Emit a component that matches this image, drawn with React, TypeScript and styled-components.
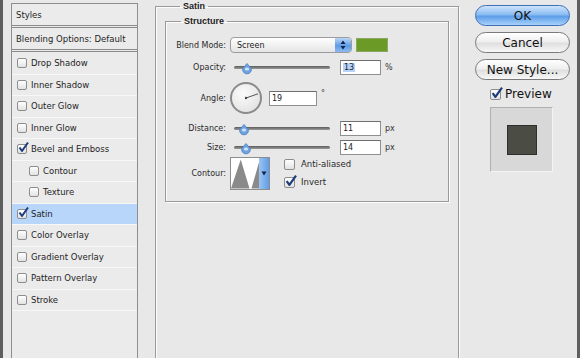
import React from 'react';
import styled, { createGlobalStyle } from 'styled-components';

const GlobalStyle = createGlobalStyle`
  body {
    margin: 0;
    background: #e8e8e8;
    font-family: "DejaVu Sans", sans-serif;
  }
  #root {
    height: 358px;
    overflow: hidden;
  }
`;

const Page = styled.div`
  display: flex;
  width: 580px;
  height: 358px;
  box-sizing: border-box;
  border-left: 3px solid #5e5e5e;
  border-right: 3px solid #5e5e5e;
  background: #e8e8e8;
  overflow: hidden;
`;

const StylesPanel = styled.div`
  margin: 3px 0 0 8px;
  width: 127px;
  box-sizing: border-box;
  border: 1px solid #8e8e8e;
  border-bottom: none;
  background: #ebebeb;
  display: flex;
  flex-direction: column;
  height: 400px;
`;

const PanelHead = styled.div`
  height: 21px;
  display: flex;
  align-items: center;
  padding-left: 4px;
  font-size: 8.5px;
  color: #1e1e1e;
  border-bottom: 3px double #8a8a8a;
`;

const StyleList = styled.div`
  display: grid;
  grid-auto-rows: 21.5px;
  padding-top: 1px;
`;

const StyleRow = styled.div<{ $indent?: boolean; $selected?: boolean }>`
  display: flex;
  align-items: center;
  gap: 4px;
  padding-left: ${(p) => (p.$indent ? 17 : 5)}px;
  font-size: 8.5px;
  color: #1e1e1e;
  border-bottom: 1px solid #f7f7f7;
  background: ${(p) => (p.$selected ? '#b7d6fa' : 'transparent')};
`;

const Box = styled.span<{ $size?: number }>`
  width: ${(p) => p.$size || 10}px;
  height: ${(p) => p.$size || 10}px;
  box-sizing: border-box;
  border: 1px solid #8d8d8d;
  border-radius: 2px;
  background: linear-gradient(#ffffff, #e2e2e2);
  position: relative;
  flex: none;
`;

const Tick = styled.svg`
  position: absolute;
  left: 0;
  top: -3px;
  overflow: visible;
`;

const Check = ({ on, size = 10 }: { on?: boolean; size?: number }) => (
  <Box $size={size}>
    {on && (
      <Tick width={size} height={size} viewBox="0 0 10 10">
        <path d="M1.5 5.5 L4 9 L10 0.5" fill="none" stroke="#1d3c7a" strokeWidth="2" strokeLinejoin="round" />
      </Tick>
    )}
  </Box>
);

const Middle = styled.fieldset`
  margin: 0 0 0 17px;
  padding: 0 9px;
  width: 304px;
  height: 400px;
  box-sizing: border-box;
  border: 1px solid #9a9a9a;
  box-shadow: inset 1px 1px 0 #fbfbfb, 1px 1px 0 #fbfbfb;
  flex: none;
`;

const Legend = styled.legend`
  margin-left: 15px;
  padding: 0 3px;
  font-family: "Liberation Sans", sans-serif;
  font-weight: bold;
  font-size: 9px;
  color: #222;
  line-height: 12px;
`;

const Structure = styled.fieldset`
  margin: 3px 0 0;
  padding: 8px 0 0;
  height: 187px;
  box-sizing: border-box;
  border: 1px solid #9a9a9a;
  box-shadow: inset 1px 1px 0 #fbfbfb, 1px 1px 0 #fbfbfb;
  display: flex;
  flex-direction: column;
`;

const Row = styled.div<{ $h: number }>`
  display: flex;
  align-items: center;
  height: ${(p) => p.$h}px;
  flex: none;
`;

const Label = styled.span`
  width: 60px;
  text-align: right;
  padding-right: 4px;
  font-size: 8px;
  color: #2a2a2a;
  flex: none;
`;

const Select = styled.div`
  width: 122px;
  height: 16px;
  box-sizing: border-box;
  border: 1px solid #9c9c9c;
  border-radius: 4px;
  background: linear-gradient(#ffffff, #e4e4e4);
  display: flex;
  align-items: center;
  overflow: hidden;
  font-size: 8px;
  color: #222;
`;

const SelectText = styled.span`
  flex: 1;
  padding-left: 6px;
`;

const SelectArrow = styled.span`
  width: 16px;
  height: 100%;
  background: linear-gradient(#bcd7f6, #5d9be6 55%, #8cbaf0);
  display: flex;
  align-items: center;
  justify-content: center;
`;

const Swatch = styled.div`
  width: 32px;
  height: 14px;
  margin-left: 4px;
  background: #6b9a26;
  border: 1px solid #8aa860;
  box-sizing: border-box;
`;

const Track = styled.div`
  position: relative;
  width: 96px;
  height: 3px;
  margin: 0 10px 0 4px;
  border-radius: 2px;
  background: linear-gradient(#5c5c5c, #9a9a9a);
  flex: none;
`;

const Thumb = styled.span`
  position: absolute;
  top: -6px;
  width: 10px;
  height: 12px;
`;

const Slider = ({ at }: { at: number }) => (
  <Track>
    <Thumb style={{ left: at }}>
      <svg width="10" height="12" viewBox="0 0 10 12">
        <path d="M5 0.5 L9.3 5.5 A4.4 4.4 0 1 1 0.7 5.5 Z" fill="#6fa3e0" stroke="#4a7cc0" strokeWidth="0.8" />
        <ellipse cx="5" cy="6" rx="2.2" ry="1.6" fill="#cbe2fb" />
      </svg>
    </Thumb>
  </Track>
);

const Field = styled.div<{ $w: number }>`
  width: ${(p) => p.$w}px;
  height: 15px;
  box-sizing: border-box;
  border: 1px solid #8f8f8f;
  border-top-color: #6e6e6e;
  background: #fff;
  font-size: 8px;
  color: #222;
  display: flex;
  align-items: center;
  padding-left: 2px;
  flex: none;
`;

const Selected = styled.span`
  background: #b5d4fb;
  padding: 0 1px;
`;

const Unit = styled.span<{ $top?: boolean }>`
  margin-left: 4px;
  font-size: 8px;
  color: #333;
  align-self: ${(p) => (p.$top ? 'flex-start' : 'center')};
  margin-top: ${(p) => (p.$top ? 10 : 0)}px;
`;

const Dial = styled.div`
  width: 32px;
  height: 32px;
  margin: 0 7px 0 0;
  box-sizing: border-box;
  border: 2px solid #8a8a8a;
  border-radius: 50%;
  background: radial-gradient(circle at 40% 35%, #fbfbfb, #dcdcdc);
  flex: none;
`;

const Contour = styled.div`
  width: 40px;
  height: 33px;
  box-sizing: border-box;
  border: 1px solid #8d8d8d;
  display: flex;
  background: #fff;
  flex: none;
`;

const ContourDrop = styled.span`
  width: 10px;
  background: linear-gradient(90deg, #9cc4f2, #5f9de6);
  display: flex;
  align-items: center;
  justify-content: center;
`;

const Options = styled.div`
  margin-left: 14px;
  display: flex;
  flex-direction: column;
  gap: 7px;
`;

const Option = styled.label`
  display: flex;
  align-items: center;
  gap: 6px;
  font-size: 8.5px;
  color: #2a2a2a;
`;

const Side = styled.div`
  flex: 1;
  padding: 5px 0 0 16px;
  display: flex;
  flex-direction: column;
  align-items: flex-start;
`;

const Button = styled.div<{ $primary?: boolean }>`
  width: 95px;
  height: 21px;
  box-sizing: border-box;
  border: 1px solid ${(p) => (p.$primary ? '#3f6fb6' : '#7a7a7a')};
  border-radius: 11px;
  background: ${(p) =>
    p.$primary
      ? 'linear-gradient(#cfe4fb, #86baf1 48%, #5a9ce8 52%, #a7d1fa)'
      : 'linear-gradient(#ffffff, #eeeeee 48%, #dedede 52%, #f7f7f7)'};
  display: flex;
  align-items: center;
  justify-content: center;
  font-size: 12px;
  color: #111;
  margin-bottom: 6px;
`;

const PreviewToggle = styled.div`
  display: flex;
  align-items: center;
  gap: 4px;
  margin: 1px 0 0 15px;
  font-size: 12px;
  color: #111;
`;

const PreviewBox = styled.div`
  margin: 6px 0 0 15px;
  width: 63px;
  height: 65px;
  box-sizing: border-box;
  background: #d8d8d8;
  border: 1px solid #b0b0b0;
  border-right-color: #f4f4f4;
  border-bottom-color: #f4f4f4;
  display: flex;
  align-items: center;
  justify-content: center;
`;

const PreviewSwatch = styled.div`
  width: 30px;
  height: 30px;
  box-sizing: border-box;
  background: #4b4d45;
  border: 1px solid #2f2f2f;
`;

const styleItems = [
  { name: 'Drop Shadow' },
  { name: 'Inner Shadow' },
  { name: 'Outer Glow' },
  { name: 'Inner Glow' },
  { name: 'Bevel and Emboss', on: true },
  { name: 'Contour', indent: true },
  { name: 'Texture', indent: true },
  { name: 'Satin', on: true, selected: true },
  { name: 'Color Overlay' },
  { name: 'Gradient Overlay' },
  { name: 'Pattern Overlay' },
  { name: 'Stroke' },
];

const App: React.FC = () => {
  return (
    <>
      <GlobalStyle />
      <Page>
        <StylesPanel>
          <PanelHead>Styles</PanelHead>
          <PanelHead>Blending Options: Default</PanelHead>
          <StyleList>
            {styleItems.map((item) => (
              <StyleRow key={item.name} $indent={item.indent} $selected={item.selected}>
                <Check on={item.on} />
                {item.name}
              </StyleRow>
            ))}
          </StyleList>
        </StylesPanel>

        <Middle>
          <Legend>Satin</Legend>
          <Structure>
            <Legend>Structure</Legend>
            <Row $h={20}>
              <Label>Blend Mode:</Label>
              <Select>
                <SelectText>Screen</SelectText>
                <SelectArrow>
                  <svg width="6" height="10" viewBox="0 0 6 10">
                    <path d="M3 0.5 L5.5 4 H0.5 Z M3 9.5 L5.5 6 H0.5 Z" fill="#10234a" />
                  </svg>
                </SelectArrow>
              </Select>
              <Swatch />
            </Row>
            <Row $h={24}>
              <Label>Opacity:</Label>
              <Slider at={8} />
              <Field $w={41}>
                <Selected>13</Selected>
              </Field>
              <Unit>%</Unit>
            </Row>
            <Row $h={38}>
              <Label>Angle:</Label>
              <Dial>
                <svg width="28" height="28" viewBox="0 0 28 28">
                  <line x1="14" y1="14" x2="26" y2="9.8" stroke="#555" strokeWidth="1" />
                  <circle cx="14" cy="14" r="1.2" fill="#444" />
                </svg>
              </Dial>
              <Field $w={48}>19</Field>
              <Unit $top>°</Unit>
            </Row>
            <Row $h={22}>
              <Label>Distance:</Label>
              <Slider at={5} />
              <Field $w={41}>11</Field>
              <Unit>px</Unit>
            </Row>
            <Row $h={17}>
              <Label>Size:</Label>
              <Slider at={7} />
              <Field $w={41}>14</Field>
              <Unit>px</Unit>
            </Row>
            <Row $h={34}>
              <Label>Contour:</Label>
              <Contour>
                <svg width="29" height="31" viewBox="0 0 29 31">
                  <polygon points="0,31 10,1 19,31" fill="#8a8a8a" />
                  <polygon points="21,31 29,3 29,31" fill="#8a8a8a" />
                </svg>
                <ContourDrop>
                  <svg width="6" height="5" viewBox="0 0 6 5">
                    <path d="M0.5 0.5 H5.5 L3 4.5 Z" fill="#10234a" />
                  </svg>
                </ContourDrop>
              </Contour>
              <Options>
                <Option>
                  <Check size={11} />
                  Anti-aliased
                </Option>
                <Option>
                  <Check on size={11} />
                  Invert
                </Option>
              </Options>
            </Row>
          </Structure>
        </Middle>

        <Side>
          <Button $primary>OK</Button>
          <Button>Cancel</Button>
          <Button>New Style...</Button>
          <PreviewToggle>
            <Check on size={11} />
            Preview
          </PreviewToggle>
          <PreviewBox>
            <PreviewSwatch />
          </PreviewBox>
        </Side>
      </Page>
    </>
  );
};

export default App;
